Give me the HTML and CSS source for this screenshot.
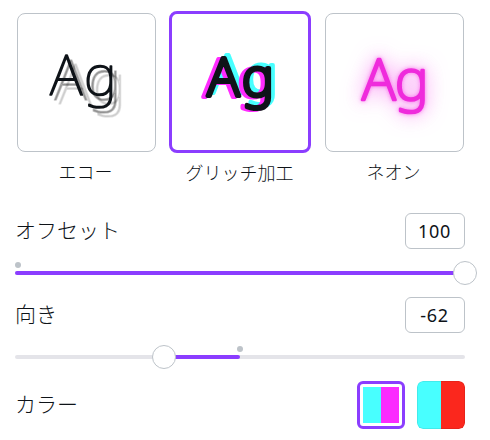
FILE: index.html
```html
<!DOCTYPE html>
<html lang="ja">
<head>
  <meta charset="UTF-8" />
  <meta name="viewport" content="width=device-width, initial-scale=1.0" />
  <title>エフェクト</title>
  <link rel="stylesheet" href="styles.css">
</head>
<body>
  <div class="panel">
    <div class="styles">
      <div class="style">
        <div class="card">
          <svg class="sample echo" viewBox="0 0 136 136">
            <text x="32 66" y="81">Ag</text>
          </svg>
        </div>
        <div class="name">エコー</div>
      </div>
      <div class="style">
        <div class="card selected">
          <svg class="sample glitch" viewBox="0 0 136 136">
            <text x="35.5 70" y="81.5">Ag</text>
          </svg>
        </div>
        <div class="name">グリッチ加工</div>
      </div>
      <div class="style">
        <div class="card">
          <svg class="sample neon" viewBox="0 0 136 136">
            <text x="36 69" y="85.5">Ag</text>
          </svg>
        </div>
        <div class="name">ネオン</div>
      </div>
    </div>

    <div class="setting">
      <div class="row">
        <span class="label">オフセット</span>
        <div class="value">100</div>
      </div>
      <div class="slider">
        <div class="fill" style="left: 0%; width: 100%"></div>
        <div class="dot" style="left: 0.67%"></div>
        <div class="thumb" style="left: 100%"></div>
      </div>
    </div>

    <div class="setting">
      <div class="row">
        <span class="label">向き</span>
        <div class="value">-62</div>
      </div>
      <div class="slider">
        <div class="fill" style="left: 33%; width: 17%"></div>
        <div class="dot" style="left: 50%"></div>
        <div class="thumb" style="left: 33%"></div>
      </div>
    </div>

    <div class="row colors">
      <span class="label">カラー</span>
      <div class="swatches">
        <div class="swatch active"><div class="pair cyan-magenta"></div></div>
        <div class="swatch"><div class="pair cyan-red"></div></div>
      </div>
    </div>
  </div>
</body>
</html>
```
FILE: styles.css
```css
* {
  box-sizing: border-box;
}
body {
  margin: 0;
  background: #fff;
  color: #0e1318;
  font-family: "Noto Sans CJK JP", sans-serif;
  font-weight: 300;
}
.panel {
  width: 490px;
  height: 440px;
  padding: 11px 25px 0 15px;
  overflow: hidden;
}
.styles {
  display: grid;
  grid-template-columns: repeat(3, 142px);
  gap: 12px;
  height: 202px;
}
.card {
  display: flex;
  align-items: center;
  justify-content: center;
  width: 139px;
  height: 139px;
  margin: 1.5px;
  border: 1.5px solid #bdc3c9;
  border-radius: 8px;
  overflow: hidden;
}
.card.selected {
  width: 142px;
  height: 142px;
  margin: 0;
  border: 3px solid #8b3dff;
}
.style .name {
  height: 36px;
  margin-left: -1px;
  line-height: 38px;
  font-size: 18px;
  text-align: center;
  white-space: nowrap;
}
.card:not(.selected) + .name {
  margin-top: -1px;
}
.sample {
  flex: none;
  width: 136px;
  height: 136px;
  fill: #0e1318;
  stroke: #0e1318;
  stroke-linejoin: round;
  font-family: "Noto Sans", sans-serif;
}
.echo {
  font-size: 56px;
  font-weight: 100;
  stroke-width: 1.6;
  text-shadow: 4.5px 4.5px 0 rgba(0, 0, 0, 0.24), 9px 9px 0 rgba(0, 0, 0, 0.1);
}
.glitch {
  font-size: 54px;
  font-weight: 200;
  stroke-width: 4.2;
  text-shadow: -4.3px 1.5px 0 #ff2bff, 3.7px -3px 0 #48ffff;
}
.neon {
  fill: #ef2bdc;
  stroke: #ef2bdc;
  font-size: 57px;
  font-weight: 200;
  stroke-width: 2.6;
  filter: drop-shadow(0 0 2px rgba(245, 40, 225, 0.6)) drop-shadow(0 0 10px rgba(245, 60, 235, 0.6));
}
.row {
  display: flex;
  align-items: center;
  justify-content: space-between;
  width: 450px;
  height: 36px;
  font-size: 21px;
}
.label {
  padding-bottom: 5px;
}
.value {
  width: 60px;
  height: 36px;
  padding-right: 1px;
  border: 1px solid #bdc3c9;
  border-radius: 6px;
  line-height: 34px;
  font-family: "Noto Sans", sans-serif;
  font-size: 18px;
  font-weight: 400;
  letter-spacing: 0.7px;
  text-align: center;
}
.setting {
  height: 84px;
}
.slider {
  position: relative;
  width: 450px;
  height: 4px;
  margin-top: 22px;
  border-radius: 2px;
  background: #e4e4e9;
}
.fill {
  position: absolute;
  top: 0;
  height: 4px;
  border-radius: 2px;
  background: #8b3dff;
}
.dot {
  position: absolute;
  top: -9px;
  width: 6px;
  height: 6px;
  margin-left: -3px;
  border-radius: 50%;
  background: #bdc3c9;
}
.thumb {
  position: absolute;
  top: -10px;
  width: 24px;
  height: 24px;
  margin-left: -12px;
  border: 1px solid #bdc3c9;
  border-radius: 50%;
  background: #fff;
}
.colors {
  height: 48px;
}
.swatches {
  display: flex;
  gap: 12px;
}
.swatch {
  width: 48px;
  height: 48px;
  border-radius: 6px;
  overflow: hidden;
}
.swatch.active {
  padding: 3px;
  border: 3px solid #8b3dff;
}
.pair {
  height: 100%;
}
.cyan-magenta {
  background: linear-gradient(to right, #48ffff 50%, #fb2bff 50%);
}
.cyan-red {
  border-radius: 6px;
  background: linear-gradient(to right, #48ffff 50%, #fb271d 50%);
  box-shadow: inset 0 0 0 1px rgba(0, 0, 0, 0.08);
}
```
